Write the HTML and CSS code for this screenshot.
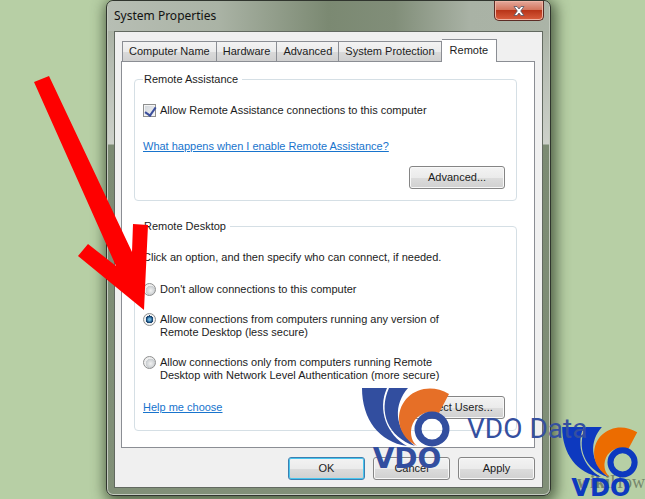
FILE: index.html
```html
<!DOCTYPE html>
<html lang="en">
<head>
<meta charset="utf-8">
<title>System Properties</title>
<link rel="stylesheet" href="styles.css">
</head>
<body>
<main class="window">
  <header class="titlebar">
    <h1 class="title">System Properties</h1>
    <button class="close" type="button" aria-label="Close">
      <svg viewBox="0 0 12 10" width="12" height="10"><path d="M1 .5H4L6 3 8 .5H11L7.7 5 11 9.500H8L6 7 4 9.500H1L4.300 5Z" fill="#fff" stroke="#535666" stroke-width=".8"/></svg>
    </button>
  </header>
  <form class="client">
    <nav class="tabs">
      <button class="tab" type="button">Computer Name</button>
      <button class="tab" type="button">Hardware</button>
      <button class="tab" type="button">Advanced</button>
      <button class="tab" type="button">System Protection</button>
      <button class="tab active" type="button">Remote</button>
    </nav>
    <section class="panel">
      <fieldset class="group">
        <legend>Remote Assistance</legend>
        <label class="option assist"><input type="checkbox" checked><span>Allow Remote Assistance connections to this computer</span></label>
        <a class="link" href="#">What happens when I enable Remote Assistance?</a>
        <div class="actions"><button class="button" type="button">Advanced...</button></div>
      </fieldset>
      <fieldset class="group">
        <legend>Remote Desktop</legend>
        <p class="intro">Click an option, and then specify who can connect, if needed.</p>
        <div class="options">
          <label class="option"><input type="radio" name="rd"><span>Don't allow connections to this computer</span></label>
          <label class="option"><input type="radio" name="rd" checked><span>Allow connections from computers running any version of<br>Remote Desktop (less secure)</span></label>
          <label class="option"><input type="radio" name="rd"><span>Allow connections only from computers running Remote<br>Desktop with Network Level Authentication (more secure)</span></label>
        </div>
        <div class="footer"><a class="link" href="#">Help me choose</a><button class="button" type="button">Select Users...</button></div>
      </fieldset>
    </section>
    <div class="commands">
      <button class="button default" type="button">OK</button>
      <button class="button" type="button">Cancel</button>
      <button class="button" type="button">Apply</button>
    </div>
  </form>
</main>

<svg class="arrow" viewBox="0 0 120 240" width="120" height="240"><path d="M0 6 15 0 98 176 99 148 114 149 110 234 44 180 54 168 82 190Z" fill="#fe0000"/></svg>

<span class="watermark"><b>wiki</b>How</span>

<svg class="logo logo-main" viewBox="0 0 92 80" width="92" height="80">
  <g id="mark">
    <path d="M1 0H26C16 22 26 47 46 58 18 54 1 31 1 0Z" fill="currentColor"/>
    <path d="M28 0H47C33 16 32 39 54 58 27 49 17 24 28 0Z" fill="currentColor"/>
    <path class="swoosh" d="M88 6C65-8 38 6 38 31 38 42 45 53 56 58 51 53 50 49 50 43 51 30 62 21 78 25Z"/>
    <circle cx="71" cy="41" r="14" fill="none" stroke="currentColor" stroke-width="7"/>
    <text class="wordmark" x="46" y="80" text-anchor="middle">VDO</text>
  </g>
</svg>
<svg class="logo logo-corner" viewBox="0 0 92 80" width="80" height="69"><use href="#mark"/></svg>
<span class="brand">VDO Data</span>
</body>
</html>
```

FILE: styles.css
```css
* { box-sizing: border-box; }
body {
  margin: 0;
  min-height: 100vh;
  position: relative;
  overflow: hidden;
  background: #b7cfa5;
  color: #1c1c1c;
  font: 11px/13px "Liberation Sans", Arial, sans-serif;
}
button, input { font: inherit; color: inherit; margin: 0; }
.window {
  margin: 0 94px 4px 106px;
  padding: 0 7px 7px;
  border: 1px solid #30352e;
  border-radius: 7px;
  background: linear-gradient(#a1aa9a 0, #b5bcb1 60px, #cdd1ca 143px, #7c8b73 144px, #819078 100%);
  box-shadow: inset 0 0 0 1px #c4cbbf, 2px 3px 14px 3px #35442ccc;
}
.titlebar {
  display: flex;
  justify-content: space-between;
  align-items: flex-start;
  height: 30px;
  margin: 0 -6px;
  padding-left: 6px;
  border-radius: 6px 6px 0 0;
  background: linear-gradient(90deg, #b7beb4 0, #aab3a5 25%, #7b8972 50%, #818e79 65%, #a9b2a5 82%, #abb4a7 100%);
}
.title {
  margin: 7px 0 0;
  font: 12px/16px "Noto Sans", "Open Sans", sans-serif;
  color: #111;
}
.close {
  display: grid;
  place-items: center;
  width: 50px;
  height: 20px;
  margin-right: 5px;
  padding: 0;
  border: 1px solid #5c2c25;
  border-top: 0;
  border-radius: 0 0 5px 5px;
  background: linear-gradient(#e4a99c, #d4775f 45%, #b93519 50%, #d95e3e);
  box-shadow: inset 0 0 0 1px #efb4a4;
}
.client {
  padding: 7px 7px 7px 6px;
  border: 1px solid #626960;
  background: #f0f0f0;
}
.tabs {
  display: flex;
  align-items: flex-end;
  padding-left: 1px;
}
.tab {
  height: 20px;
  padding: 0 6px;
  border: 1px solid #8b8e94;
  border-left-width: 0;
  border-bottom: 0;
  background: linear-gradient(#f3f3f3, #ebebeb 50%, #dadada 51%, #d0d0d0);
  white-space: nowrap;
}
.tab:first-child { border-left-width: 1px; }
.tab.active {
  height: 23px;
  margin-bottom: -1px;
  padding: 0 8px 2px;
  background: #fff;
  position: relative;
}
.panel {
  padding: 11px 17px 16px 12px;
  border: 1px solid #8b8e94;
  background: #fff;
}
.group {
  min-width: 0;
  margin: 0 0 19px;
  padding: 18px 11px 11px 8px;
  border: 1px solid #d5dfe5;
  border-radius: 4px;
}
.group:last-child { margin-bottom: 0; }
legend { padding: 0 4px 0 1px; }
.option {
  display: flex;
  align-items: flex-start;
  gap: 4px;
}
.option span { white-space: nowrap; }
input[type="checkbox"], input[type="radio"] {
  appearance: none;
  flex: none;
  width: 13px;
  height: 13px;
  border: 1px solid #8e8f8f;
}
input[type="checkbox"] {
  background: linear-gradient(135deg, #cfd4da, #f6f6f6);
  box-shadow: inset 0 0 0 1px #f4f4f4;
  position: relative;
}
input[type="checkbox"]::after {
  content: "";
  position: absolute;
  left: 3px;
  top: 0;
  width: 5px;
  height: 9px;
  border: solid #3c4f9c;
  border-width: 0 2px 2px 0;
  transform: rotate(35deg);
}
input[type="radio"] {
  border-radius: 50%;
  background: radial-gradient(circle at 60% 60%, #f2f2f2, #c8cccf 50%, #eee 55%);
}
input[type="radio"]:checked {
  background: radial-gradient(circle at 50% 50%, #6fb5dd 0 1px, #16497a 3px, #1b3d63 4px, #f0f0f0 4px);
}
.link { color: #1874cd; text-decoration: underline; }
.assist { margin-bottom: 23px; }
.actions { display: flex; justify-content: flex-end; margin-top: 13px; }
.button {
  width: 96px;
  height: 23px;
  padding: 0;
  border: 1px solid #858585;
  border-radius: 3px;
  background: linear-gradient(#f3f3f3, #ebebeb 50%, #dcdcdc 51%, #d0d0d0);
  box-shadow: inset 0 0 0 1px #f8f8f8;
}
.intro { margin: 0; }
.options { display: grid; gap: 17px; margin: 19px 0 14px; }
.footer { display: flex; justify-content: space-between; align-items: center; }
.commands {
  display: flex;
  justify-content: flex-end;
  gap: 8px;
  margin-top: 9px;
}
.commands .button { width: 77px; }
.commands .default {
  border-color: #3c7fb1;
  box-shadow: inset 0 0 0 1px #48c5ee;
}
.arrow { position: absolute; left: 34px; top: 76px; }
.logo { position: absolute; overflow: visible; }
.logo-main { left: 361px; top: 388px; color: #324e9f; --accent: #e66f27; }
.logo-corner { left: 561px; top: 427px; color: #0d39bf; --accent: #ec6c00; }
.swoosh { fill: var(--accent); }
.wordmark { fill: currentColor; font: bold 28px "DejaVu Sans", sans-serif; }
.brand {
  position: absolute;
  left: 467px;
  top: 414px;
  color: #35509f;
  font: 28px/30px Roboto, sans-serif;
}
.watermark {
  position: absolute;
  left: 577px;
  top: 472px;
  color: #65725dcc;
  font: 18px/20px "Liberation Serif", serif;
}
```
